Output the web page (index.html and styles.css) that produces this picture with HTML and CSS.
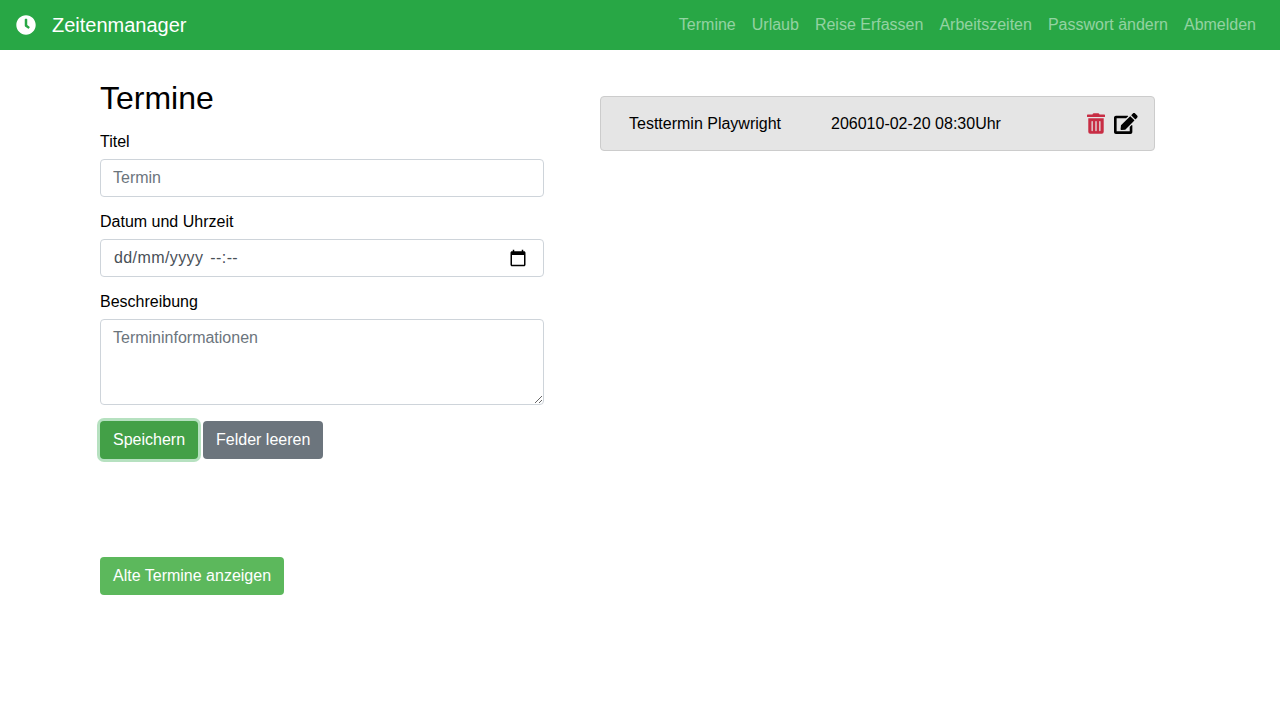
FILE: index.html
```html
<!DOCTYPE html>
<html lang="de">
<head>
    <meta charset="UTF-8">
    <meta name="viewport" content="width=device-width, initial-scale=1.0">
    <title>Zeitenmanager</title>
    <link rel="stylesheet" href="styles.css">
</head>
<body>

    <nav class="navbar">
        <a class="brand" href="#">
            <svg class="brand-icon" viewBox="0 0 512 512"><path fill="currentColor" d="M256,8C119,8,8,119,8,256S119,504,256,504,504,393,504,256,393,8,256,8Zm92.49,313h0l-20,25a16,16,0,0,1-22.49,2.5h0l-67-49.72a40,40,0,0,1-15-31.23V112a16,16,0,0,1,16-16h32a16,16,0,0,1,16,16V256l58,42.5A16,16,0,0,1,348.49,321Z"/></svg>
            Zeitenmanager
        </a>
        <ul class="nav-links">
            <li><a href="#">Termine</a></li>
            <li><a href="#">Urlaub</a></li>
            <li><a href="#">Reise Erfassen</a></li>
            <li><a href="#">Arbeitszeiten</a></li>
            <li><a href="#">Passwort ändern</a></li>
            <li><a href="#">Abmelden</a></li>
        </ul>
    </nav>

    <main class="content">
        <section class="form-column">
            <h1>Termine</h1>
            <form>
                <div class="form-group">
                    <label for="title">Titel</label>
                    <input id="title" class="form-control" type="text" placeholder="Termin">
                </div>
                <div class="form-group">
                    <label for="date">Datum und Uhrzeit</label>
                    <div id="date" class="form-control date-field">
                        <span class="date-part">dd/mm/yyyy</span>
                        <span class="time-part">--:--</span>
                        <svg class="calendar-icon" viewBox="0 0 24 24"><path fill="currentColor" d="M20 3h-1V1h-2v2H7V1H5v2H4c-1.100 0-2 .9-2 2v16c0 1.100.9 2 2 2h16c1.100 0 2-.9 2-2V5c0-1.100-.9-2-2-2zm0 18H4V8h16v13z"/></svg>
                    </div>
                </div>
                <div class="form-group">
                    <label for="info">Beschreibung</label>
                    <textarea id="info" class="form-control" placeholder="Termininformationen"></textarea>
                </div>
                <div class="form-buttons">
                    <button type="button" class="btn btn-save">Speichern</button>
                    <button type="reset" class="btn btn-clear">Felder leeren</button>
                </div>
            </form>
            <button type="button" class="btn btn-old">Alte Termine anzeigen</button>
        </section>

        <section class="list-column">
            <div class="appointment">
                <span class="appointment-title">Testtermin Playwright</span>
                <span class="appointment-date">206010-02-20 08:30Uhr</span>
                <span class="appointment-actions">
                    <svg class="icon icon-delete" viewBox="0 0 448 512"><path fill="currentColor" d="M32 464a48 48 0 0 0 48 48h288a48 48 0 0 0 48-48V128H32zm272-256a16 16 0 0 1 32 0v224a16 16 0 0 1-32 0zm-96 0a16 16 0 0 1 32 0v224a16 16 0 0 1-32 0zm-96 0a16 16 0 0 1 32 0v224a16 16 0 0 1-32 0zM432 32H312l-9.400-18.700A24 24 0 0 0 281.100 0H166.800a23.720 23.720 0 0 0-21.400 13.300L136 32H16A16 16 0 0 0 0 48v32a16 16 0 0 0 16 16h416a16 16 0 0 0 16-16V48a16 16 0 0 0-16-16z"/></svg>
                    <svg class="icon icon-edit" viewBox="0 0 576 512"><path fill="currentColor" d="M402.600 83.200l90.200 90.200c3.800 3.800 3.800 10 0 13.800L274.400 405.600l-92.800 10.300c-12.400 1.400-22.900-9.100-21.500-21.500l10.300-92.800L388.800 83.200c3.800-3.800 10-3.800 13.800 0zm162-22.900l-48.800-48.800c-15.200-15.200-39.900-15.200-55.200 0l-35.400 35.400c-3.800 3.800-3.800 10 0 13.800l90.200 90.200c3.800 3.800 10 3.800 13.800 0l35.400-35.400c15.200-15.300 15.200-40 0-55.200zM384 346.200V448H64V128h229.800c3.200 0 6.200-1.300 8.500-3.500l40-40c7.600-7.600 2.200-20.500-8.500-20.500H48C21.500 64 0 85.500 0 112v352c0 26.500 21.500 48 48 48h352c26.500 0 48-21.500 48-48V306.200c0-10.700-12.900-16-20.500-8.500l-40 40c-2.200 2.300-3.500 5.300-3.500 8.500z"/></svg>
                </span>
            </div>
        </section>
    </main>

</body>
</html>
```

FILE: styles.css
```css
/* styles.css */
* {
    box-sizing: border-box;
}

body {
    margin: 0;
    font-family: "Liberation Sans", Arial, sans-serif;
    font-size: 16px;
    line-height: 24px;
    color: #000;
    background-color: #fff;
}

a {
    text-decoration: none;
}

.navbar {
    display: flex;
    align-items: center;
    justify-content: space-between;
    height: 50px;
    padding: 0 16px;
    background-color: #28a745;
}

.brand {
    display: flex;
    align-items: center;
    gap: 16px;
    font-size: 20px;
    color: #fff;
}

.brand-icon {
    width: 20px;
    height: 20px;
}

.nav-links {
    display: flex;
    margin: 0;
    padding: 0;
    list-style: none;
}

.nav-links a {
    display: block;
    padding: 0 8px;
    color: rgba(255, 255, 255, 0.5);
}

.content {
    display: flex;
    align-items: flex-start;
    gap: 56px;
    padding: 30px 0 0 100px;
}

.form-column {
    width: 444px;
}

.list-column {
    width: 555px;
    padding-top: 16px;
}

h1 {
    margin: 0 0 14px;
    font-size: 32px;
    font-weight: 400;
    line-height: 36px;
}

label {
    display: block;
    margin-bottom: 5px;
}

.form-group {
    margin-bottom: 13px;
}

.form-control {
    display: block;
    width: 100%;
    height: 38px;
    padding: 6px 12px;
    font-family: inherit;
    font-size: 16px;
    line-height: 24px;
    color: #495057;
    background-color: #fff;
    border: 1px solid #ced4da;
    border-radius: 4px;
}

.form-control::placeholder {
    color: #6c757d;
    opacity: 1;
}

textarea.form-control {
    height: 86px;
}

.date-field {
    display: flex;
    align-items: center;
    padding-left: 13px;
    padding-right: 16px;
}

.date-part {
    letter-spacing: 0.4px;
}

.time-part {
    margin-left: 7px;
    letter-spacing: 0.4px;
}

.calendar-icon {
    width: 18px;
    height: 18px;
    margin-left: auto;
    color: #000;
}

.form-buttons {
    display: flex;
    gap: 5px;
    margin-top: 16px;
}

.btn {
    display: block;
    height: 38px;
    padding: 6px 13px;
    font-family: inherit;
    font-size: 16px;
    line-height: 24px;
    color: #fff;
    border: 0;
    border-radius: 4px;
}

.btn-save {
    background-color: #43a047;
    box-shadow: 0 0 0 3px rgba(72, 180, 97, 0.4);
}

.btn-clear {
    background-color: #6c757d;
}

.btn-old {
    margin-top: 98px;
    background-color: #5cb85c;
}

.appointment {
    display: flex;
    align-items: center;
    height: 55px;
    padding: 0 16px 0 28px;
    background-color: #e5e5e5;
    border: 1px solid #ccc;
    border-radius: 4px;
}

.appointment-title {
    width: 202px;
}

.appointment-actions {
    display: flex;
    gap: 9px;
    margin-left: auto;
}

.icon {
    height: 21px;
}

.icon-delete {
    width: 18px;
    color: #c82d44;
}

.icon-edit {
    width: 23.6px;
    color: #000;
}
```
